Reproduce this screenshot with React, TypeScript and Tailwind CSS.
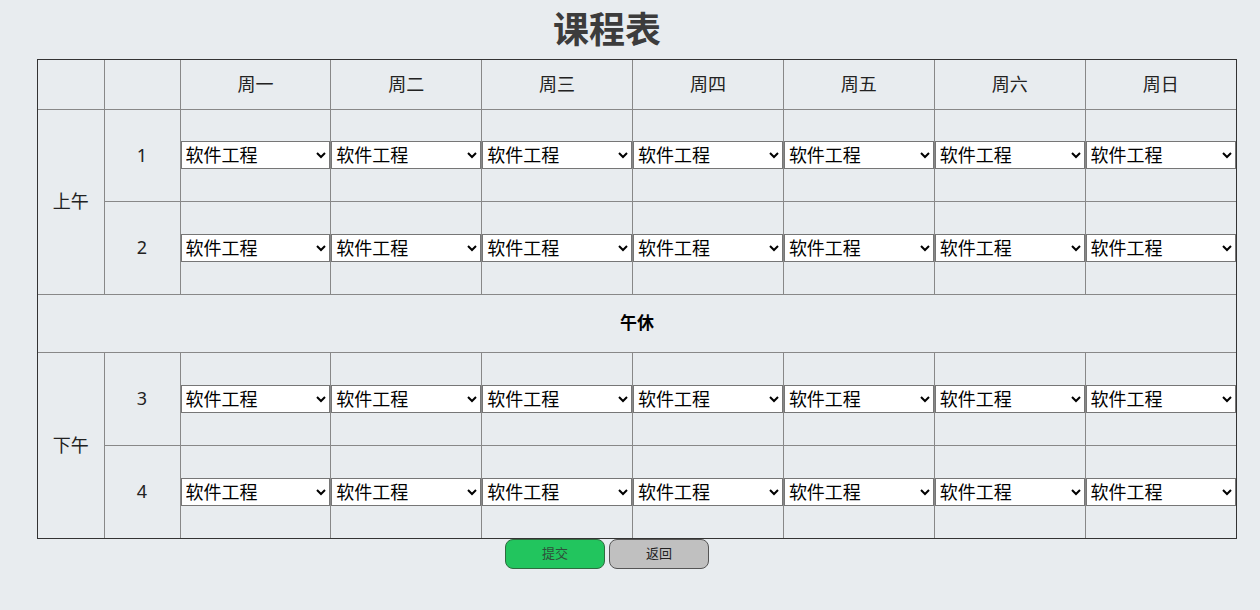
const days = ["周一", "周二", "周三", "周四", "周五", "周六", "周日"];

const font = "font-['Noto_Sans','Noto_Sans_CJK_SC',sans-serif]";

function CourseSelect() {
  return (
    <select
      defaultValue="软件工程"
      className="block h-[28px] w-full border border-[#767676] bg-white text-[18px] leading-none text-black"
    >
      <option>软件工程</option>
      <option>数据结构</option>
      <option>操作系统</option>
    </select>
  );
}

function LessonRow({ n, label, h }: { n: number; label?: string; h: string }) {
  return (
    <tr className={h}>
      {label && (
        <td rowSpan={2} className="border border-[#888] text-center">
          {label}
        </td>
      )}
      <td className="border border-[#888] text-center">{n}</td>
      {days.map((d) => (
        <td key={d} className="border border-[#888] p-0">
          <CourseSelect />
        </td>
      ))}
    </tr>
  );
}

export default function App() {
  return (
    <div className={`min-h-[610px] bg-[#e8ecef] text-[18px] text-[#222] ${font}`}>
      <h1 className="pr-[46px] text-center text-[36px] font-bold leading-[59px] text-[#3c3c3c]">
        课程表
      </h1>
      <div className="ml-[37px] w-[1200px] border border-[#333]">
        <table className="w-full table-fixed border-collapse border-hidden">
          <colgroup>
            <col className="w-[66px]" />
            <col className="w-[76px]" />
            {days.map((d) => (
              <col key={d} />
            ))}
          </colgroup>
          <thead>
            <tr className="h-[49px]">
              <th className="border border-[#888]"></th>
              <th className="border border-[#888]"></th>
              {days.map((d) => (
                <th key={d} className="border border-[#888] font-normal">
                  {d}
                </th>
              ))}
            </tr>
          </thead>
          <tbody>
            <LessonRow n={1} label="上午" h="h-[92px]" />
            <LessonRow n={2} h="h-[93px]" />
            <tr className="h-[58px]">
              <td colSpan={9} className="border border-[#888] text-center text-[17px] font-bold text-black">
                午休
              </td>
            </tr>
            <LessonRow n={3} label="下午" h="h-[93px]" />
            <LessonRow n={4} h="h-[93px]" />
          </tbody>
        </table>
      </div>
      <div className="flex justify-center gap-[4px] pr-[46px]">
        <button className="h-[30px] w-[100px] rounded-[8px] border border-[#2f6b3f] bg-[#22c55e] text-[13px] text-[#2e4f3a]">
          提交
        </button>
        <button className="h-[30px] w-[100px] rounded-[8px] border border-[#555] bg-[#c0c0c0] text-[13px] text-[#222]">
          返回
        </button>
      </div>
    </div>
  );
}
